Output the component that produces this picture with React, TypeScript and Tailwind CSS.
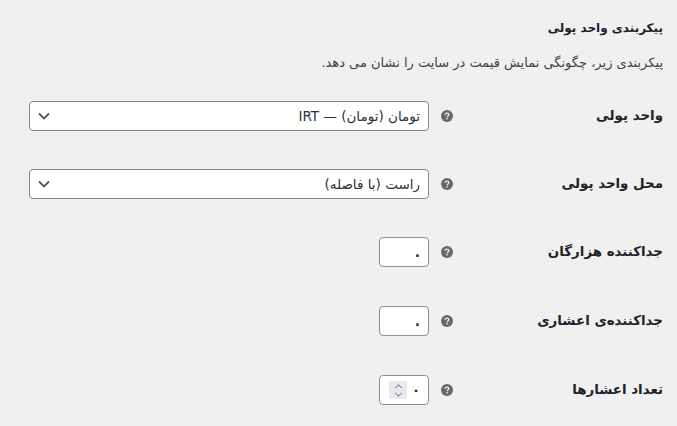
import React from "react";

const font = "font-['DejaVu_Sans',sans-serif]";

function Help() {
  return (
    <svg viewBox="0 0 12 12" className="h-3 w-3 shrink-0">
      <circle cx="6" cy="6" r="6" fill="#646970" />
      <path d="M4.2 4.7c0-1 .8-1.6 1.8-1.6s1.8.6 1.8 1.5c0 1.3-1.7 1.3-1.7 2.6" fill="none" stroke="#f0f0f1" strokeWidth="1.3" />
      <rect x="5.4" y="8" width="1.4" height="1.4" fill="#f0f0f1" />
    </svg>
  );
}

function Chevron() {
  return (
    <svg viewBox="0 0 12 8" className="h-2 w-3">
      <path d="M1 1.5l5 5 5-5" fill="none" stroke="#50575e" strokeWidth="1.8" />
    </svg>
  );
}

function Row({ label, className, children }: { label: string; className?: string; children: React.ReactNode }) {
  return (
    <div className={`flex items-center h-[30px] ${className ?? ""}`}>
      <div className="w-[204px] shrink-0 text-[13.4px] font-bold text-[#1d2327]">{label}</div>
      <div className="w-[24px] shrink-0 flex justify-center"><Help /></div>
      <div className="mr-[6px]">{children}</div>
    </div>
  );
}

function SelectBox({ value }: { value: string }) {
  return (
    <div className="w-[400px] h-[30px] bg-white border border-[#7e8993] rounded-[4px] flex items-center justify-between px-[8px] text-[13.5px] text-[#2c3338]">
      <span>{value}</span>
      <Chevron />
    </div>
  );
}

function SmallInput({ value }: { value: string }) {
  return (
    <div className="w-[50px] h-[30px] bg-white border border-[#8c8f94] rounded-[4px] flex items-center pr-[8px] text-[14px] font-bold text-[#2c3338]">
      {value}
    </div>
  );
}

function NumberInput() {
  return (
    <div className="w-[50px] h-[30px] bg-white border border-[#8c8f94] rounded-[4px] flex items-center gap-[4px] pr-[7px] text-[14px] font-bold text-[#2c3338]">
      <span className="w-[10px] text-center">۰</span>
      <div className="w-[18px] h-[18px] bg-[#e9e9ed] flex flex-col items-center justify-center gap-[3px]">
        <svg viewBox="0 0 10 6" className="h-[5px] w-[9px]"><path d="M1 5l4-4 4 4" fill="none" stroke="#8f8f9d" strokeWidth="1.3" /></svg>
        <svg viewBox="0 0 10 6" className="h-[5px] w-[9px]"><path d="M1 1l4 4 4-4" fill="none" stroke="#8f8f9d" strokeWidth="1.3" /></svg>
      </div>
    </div>
  );
}

export default function App() {
  return (
    <div dir="rtl" className={`${font} w-[677px] h-[426px] overflow-hidden bg-[#f0f0f1] pt-[18px] pr-[14px]`}>
      <h2 className="text-[12px] font-bold leading-[20px] text-[#1d2327]">پیکربندی واحد پولی</h2>
      <p className="mt-[15px] text-[13px] leading-[20px] text-[#3c434a]">پیکربندی زیر، چگونگی نمایش قیمت در سایت را نشان می دهد.</p>
      <div className="mt-[28px] flex flex-col">
        <Row label="واحد پولی"><SelectBox value="تومان (تومان) — IRT" /></Row>
        <Row label="محل واحد پولی" className="mt-[38px]"><SelectBox value="راست (با فاصله)" /></Row>
        <Row label="جداکننده هزارگان" className="mt-[38px]"><SmallInput value="." /></Row>
        <Row label="جداکننده‌ی اعشاری" className="mt-[39px]"><SmallInput value="." /></Row>
        <Row label="تعداد اعشارها" className="mt-[39px]"><NumberInput /></Row>
      </div>
    </div>
  );
}
